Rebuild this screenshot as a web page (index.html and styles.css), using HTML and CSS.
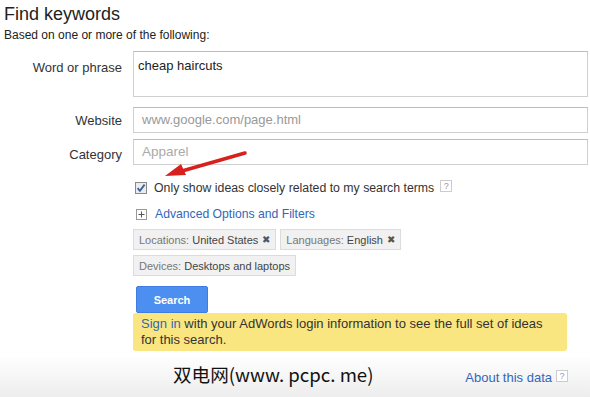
FILE: index.html
```html
<!DOCTYPE html>
<html>
<head>
<meta charset="utf-8">
<link rel="stylesheet" href="styles.css">
</head>
<body>
<div class="page">
  <h1 class="title">Find keywords</h1>
  <div class="subtitle">Based on one or more of the following:</div>
  <div class="form">
    <div class="label label-top">Word or phrase</div>
    <div class="field textarea">cheap haircuts</div>
    <div class="label">Website</div>
    <div class="field input placeholder">www.google.com/page.html</div>
    <div class="label">Category</div>
    <div class="field input category">Apparel</div>
    <div></div>
    <div class="options">
      <div class="check-row">
        <span class="checkbox"><svg width="12" height="12" viewBox="0 0 12 12"><rect x="0.5" y="0.5" width="11" height="11" fill="#ececec" stroke="#8a8a8a"/><path d="M2.6 6.2 L4.9 8.8 L9.6 2.6" fill="none" stroke="#3a5ea0" stroke-width="1.8"/></svg></span>
        <span class="check-text">Only show ideas closely related to my search terms</span>
        <span class="help">?</span>
      </div>
      <div class="adv-row">
        <span class="plus"><svg width="11" height="11" viewBox="0 0 11 11"><rect x="0.5" y="0.5" width="10" height="10" fill="#fff" stroke="#999"/><path d="M2.5 5.5 H8.5 M5.5 2.5 V8.5" stroke="#555" stroke-width="1"/></svg></span>
        <span class="link">Advanced Options and Filters</span>
      </div>
      <div class="chips">
        <span class="chip"><span class="k">Locations:</span> United States <span class="x">✖</span></span>
        <span class="chip"><span class="k">Languages:</span> English <span class="x">✖</span></span>
      </div>
      <div class="chips">
        <span class="chip"><span class="k">Devices:</span> Desktops and laptops</span>
      </div>
      <div class="btn-row"><span class="btn">Search</span></div>
      <div class="notice"><span class="link">Sign in</span> with your AdWords login information to see the full set of ideas for this search.</div>
    </div>
  </div>
  <div class="footer">
    <span class="about">About this data</span><span class="help help-foot">?</span>
  </div>
  <div class="watermark">双电网(www. pcpc. me)</div>
  <svg class="arrow" width="100" height="40" viewBox="0 0 100 40">
    <path d="M83 4 L20 22" stroke="#d8201c" stroke-width="3.5" stroke-linecap="round" fill="none"/>
    <path d="M3 27 L19 15 L24 26 Z" fill="#d8201c"/>
  </svg>
</div>
</body>
</html>
```

FILE: styles.css
```css
* { box-sizing: border-box; }
html, body { margin: 0; padding: 0; background: #fff; }
body { font-family: "Liberation Sans", Arial, sans-serif; color: #222; width: 590px; height: 397px; overflow: hidden; }
.page { position: relative; width: 590px; height: 397px; }
.title { margin: 0; padding: 3px 0 0 4px; font-size: 18px; font-weight: normal; line-height: 22px; color: #222; }
.subtitle { padding-left: 4px; font-size: 12px; line-height: 14px; margin-top: 3px; color: #222; }
.form { display: grid; grid-template-columns: 122px 455px; column-gap: 11px; row-gap: 10px; margin-top: 9px; }
.label { font-size: 13px; color: #333; text-align: right; align-self: center; }
.label-top { align-self: start; padding-top: 9px; }
.field { border: 1px solid #d0d0d0; border-top-color: #bcbcbc; font-size: 13px; background: #fff; }
.textarea { height: 46px; padding: 6px 0 0 4px; color: #222; }
.input { height: 26px; padding: 0 0 0 8px; line-height: 24px; color: #999; }
.category { margin-top: -4px; font-size: 13.5px; color: #aaa; }
.options { grid-column: 2; margin-top: 3px; }
.check-row { display: flex; align-items: center; height: 20px; padding-left: 2px; }
.checkbox { display: flex; width: 12px; height: 12px; }
.check-text { margin-left: 7px; font-size: 12.3px; color: #333; }
.help { display: inline-flex; align-items: center; justify-content: center; width: 12px; height: 12px; border: 1px solid #ccc; font-size: 9px; color: #999; margin-left: 6px; margin-top: -4px; background: #fff; }
.adv-row { display: flex; align-items: center; height: 20px; margin-top: 6px; padding-left: 3px; }
.plus { display: flex; width: 11px; height: 11px; }
.link { color: #3366bb; font-size: 13px; }
.adv-row .link { margin-left: 8px; font-size: 12.2px; }
.chips { display: flex; gap: 4px; margin-top: 5px; }
.chip { display: inline-flex; align-items: center; height: 21px; padding: 0 5px; background: #f1f1f1; border: 1px solid #dcdcdc; font-size: 11px; color: #444; white-space: pre; }
.chip .k { color: #777; }
.chip .x { font-size: 10px; color: #555; margin-left: 1px; }
.btn-row { margin-top: 10px; padding-left: 3px; }
.btn { display: inline-flex; align-items: center; justify-content: center; width: 72px; height: 27px; background: #4d8ff0; border: 1px solid #3f7ee0; border-radius: 2px; color: #fff; font-weight: bold; font-size: 11px; }
.notice { width: 434px; margin-top: 0; padding: 3px 8px 3px 8px; background: #f9e680; border-radius: 3px; font-size: 13px; line-height: 16px; color: #333; }
.notice .link { font-size: 13px; }
.footer { position: absolute; left: 0; right: 0; bottom: 0; height: 42px; background: linear-gradient(#fff, #ededed); display: flex; justify-content: flex-end; align-items: center; padding-right: 22px; padding-top: 2px; }
.about { color: #3366bb; font-size: 13px; }
.help-foot { margin-left: 4px; margin-top: -2px; }
.watermark { position: absolute; left: 173px; top: 361px; font-family: "Noto Sans CJK SC", sans-serif; font-size: 18.6px; color: #111; line-height: 26px; }
.arrow { position: absolute; left: 162px; top: 149px; }
```
